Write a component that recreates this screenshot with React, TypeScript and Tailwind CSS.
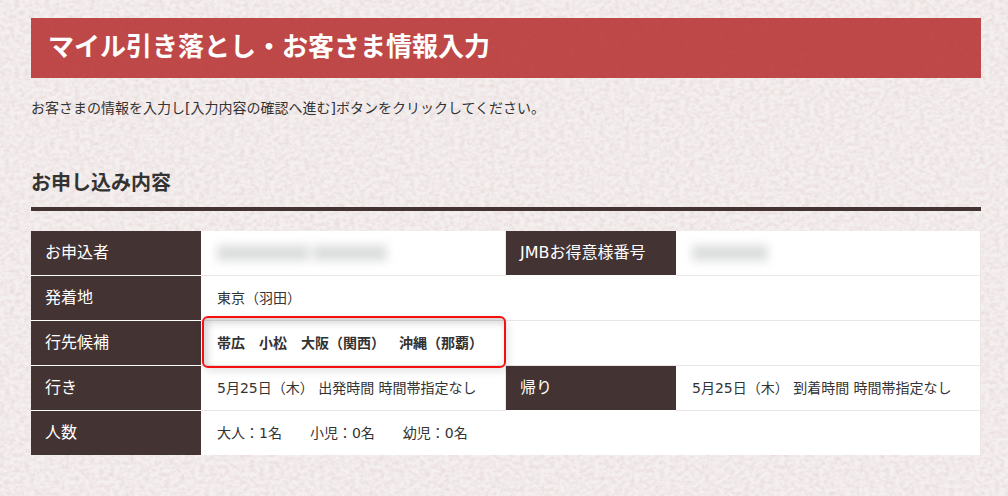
import type { ReactNode } from 'react';

const PaperTexture = () => (
  <svg className="absolute inset-0 -z-10 h-full w-full" aria-hidden="true">
    <filter id="paper" x="0" y="0" width="100%" height="100%" colorInterpolationFilters="sRGB">
      <feTurbulence type="fractalNoise" baseFrequency="0.2 0.26" numOctaves="4" seed="4" />
      {/* pinkish specks, strength taken from the noise */}
      <feColorMatrix
        values="0 0 0 0 0.82
                0 0 0 0 0.7
                0 0 0 0 0.7
                0.6 0 0 0 -0.2"
      />
    </filter>
    <rect width="100%" height="100%" filter="url(#paper)" />
  </svg>
);

const HeaderCell = ({ children }: { children: ReactNode }) => (
  <th
    scope="row"
    className="h-[45px] border-b border-white bg-[#443333] pl-[14px] text-left text-base leading-6 font-normal text-white group-last:h-11 group-last:border-b-0"
  >
    {children}
  </th>
);

const DataCell = ({ children, span }: { children: ReactNode; span?: number }) => (
  <td
    colSpan={span}
    className="relative h-[45px] border-r border-b border-[#ebe5e5] bg-white pl-4 text-sm leading-5 group-last:h-11 group-last:border-b-0"
  >
    {children}
  </td>
);

const Masked = ({ bars }: { bars: string[] }) => (
  <div className="flex gap-1 blur-[5px]" aria-label="非表示">
    {bars.map((width) => (
      <span key={width} className={`h-4 bg-[#dcdedd] ${width}`} />
    ))}
  </div>
);

const App = () => {
  return (
    <div className="relative isolate min-h-screen bg-[#f5f0f0] pt-[18px] pr-[27px] pb-10 pl-[31px] font-['DejaVu_Sans','Noto_Sans_CJK_JP',sans-serif] text-[#333333] [text-spacing-trim:space-all]">
      <PaperTexture />
      <h1 className="bg-[#b52b2b]/85 px-[17px] pt-[11px] pb-[13px] text-[26px] leading-9 font-bold text-white">
        マイル引き落とし・お客さま情報入力
      </h1>
      <p className="mt-5 text-sm leading-5">
        お客さまの情報を入力し[入力内容の確認へ進む]ボタンをクリックしてください。
      </p>

      <h2 className="mt-12 border-b-4 border-[#443333] pt-[2px] pb-[9px] text-xl leading-[30px] font-bold">
        お申し込み内容
      </h2>

      <table className="mt-5 w-full table-fixed border-separate border-spacing-0">
        <colgroup>
          <col className="w-[170px]" />
          <col />
          <col className="w-[170px]" />
          <col />
        </colgroup>
        <tbody>
          <tr className="group">
            <HeaderCell>お申込者</HeaderCell>
            <DataCell>
              <Masked bars={['w-[92px]', 'w-[74px]']} />
            </DataCell>
            <HeaderCell>JMBお得意様番号</HeaderCell>
            <DataCell>
              <Masked bars={['w-[76px]']} />
            </DataCell>
          </tr>
          <tr className="group">
            <HeaderCell>発着地</HeaderCell>
            <DataCell span={3}>東京（羽田）</DataCell>
          </tr>
          <tr className="group">
            <HeaderCell>行先候補</HeaderCell>
            <DataCell span={3}>
              <strong>帯広　小松　大阪（関西）　沖縄（那覇）</strong>
              <span className="absolute -top-[5px] left-px z-10 h-[52px] w-[304px] rounded-md border-2 border-[#f50f0f] shadow-[2px_3px_8px_rgba(0,0,0,0.12),inset_3px_4px_8px_rgba(0,0,0,0.2)]" />
            </DataCell>
          </tr>
          <tr className="group">
            <HeaderCell>行き</HeaderCell>
            <DataCell>5月25日（木） 出発時間 時間帯指定なし</DataCell>
            <HeaderCell>帰り</HeaderCell>
            <DataCell>5月25日（木） 到着時間 時間帯指定なし</DataCell>
          </tr>
          <tr className="group">
            <HeaderCell>人数</HeaderCell>
            <DataCell span={3}>大人：1名　　小児：0名　　幼児：0名</DataCell>
          </tr>
        </tbody>
      </table>
    </div>
  );
};

export default App;
